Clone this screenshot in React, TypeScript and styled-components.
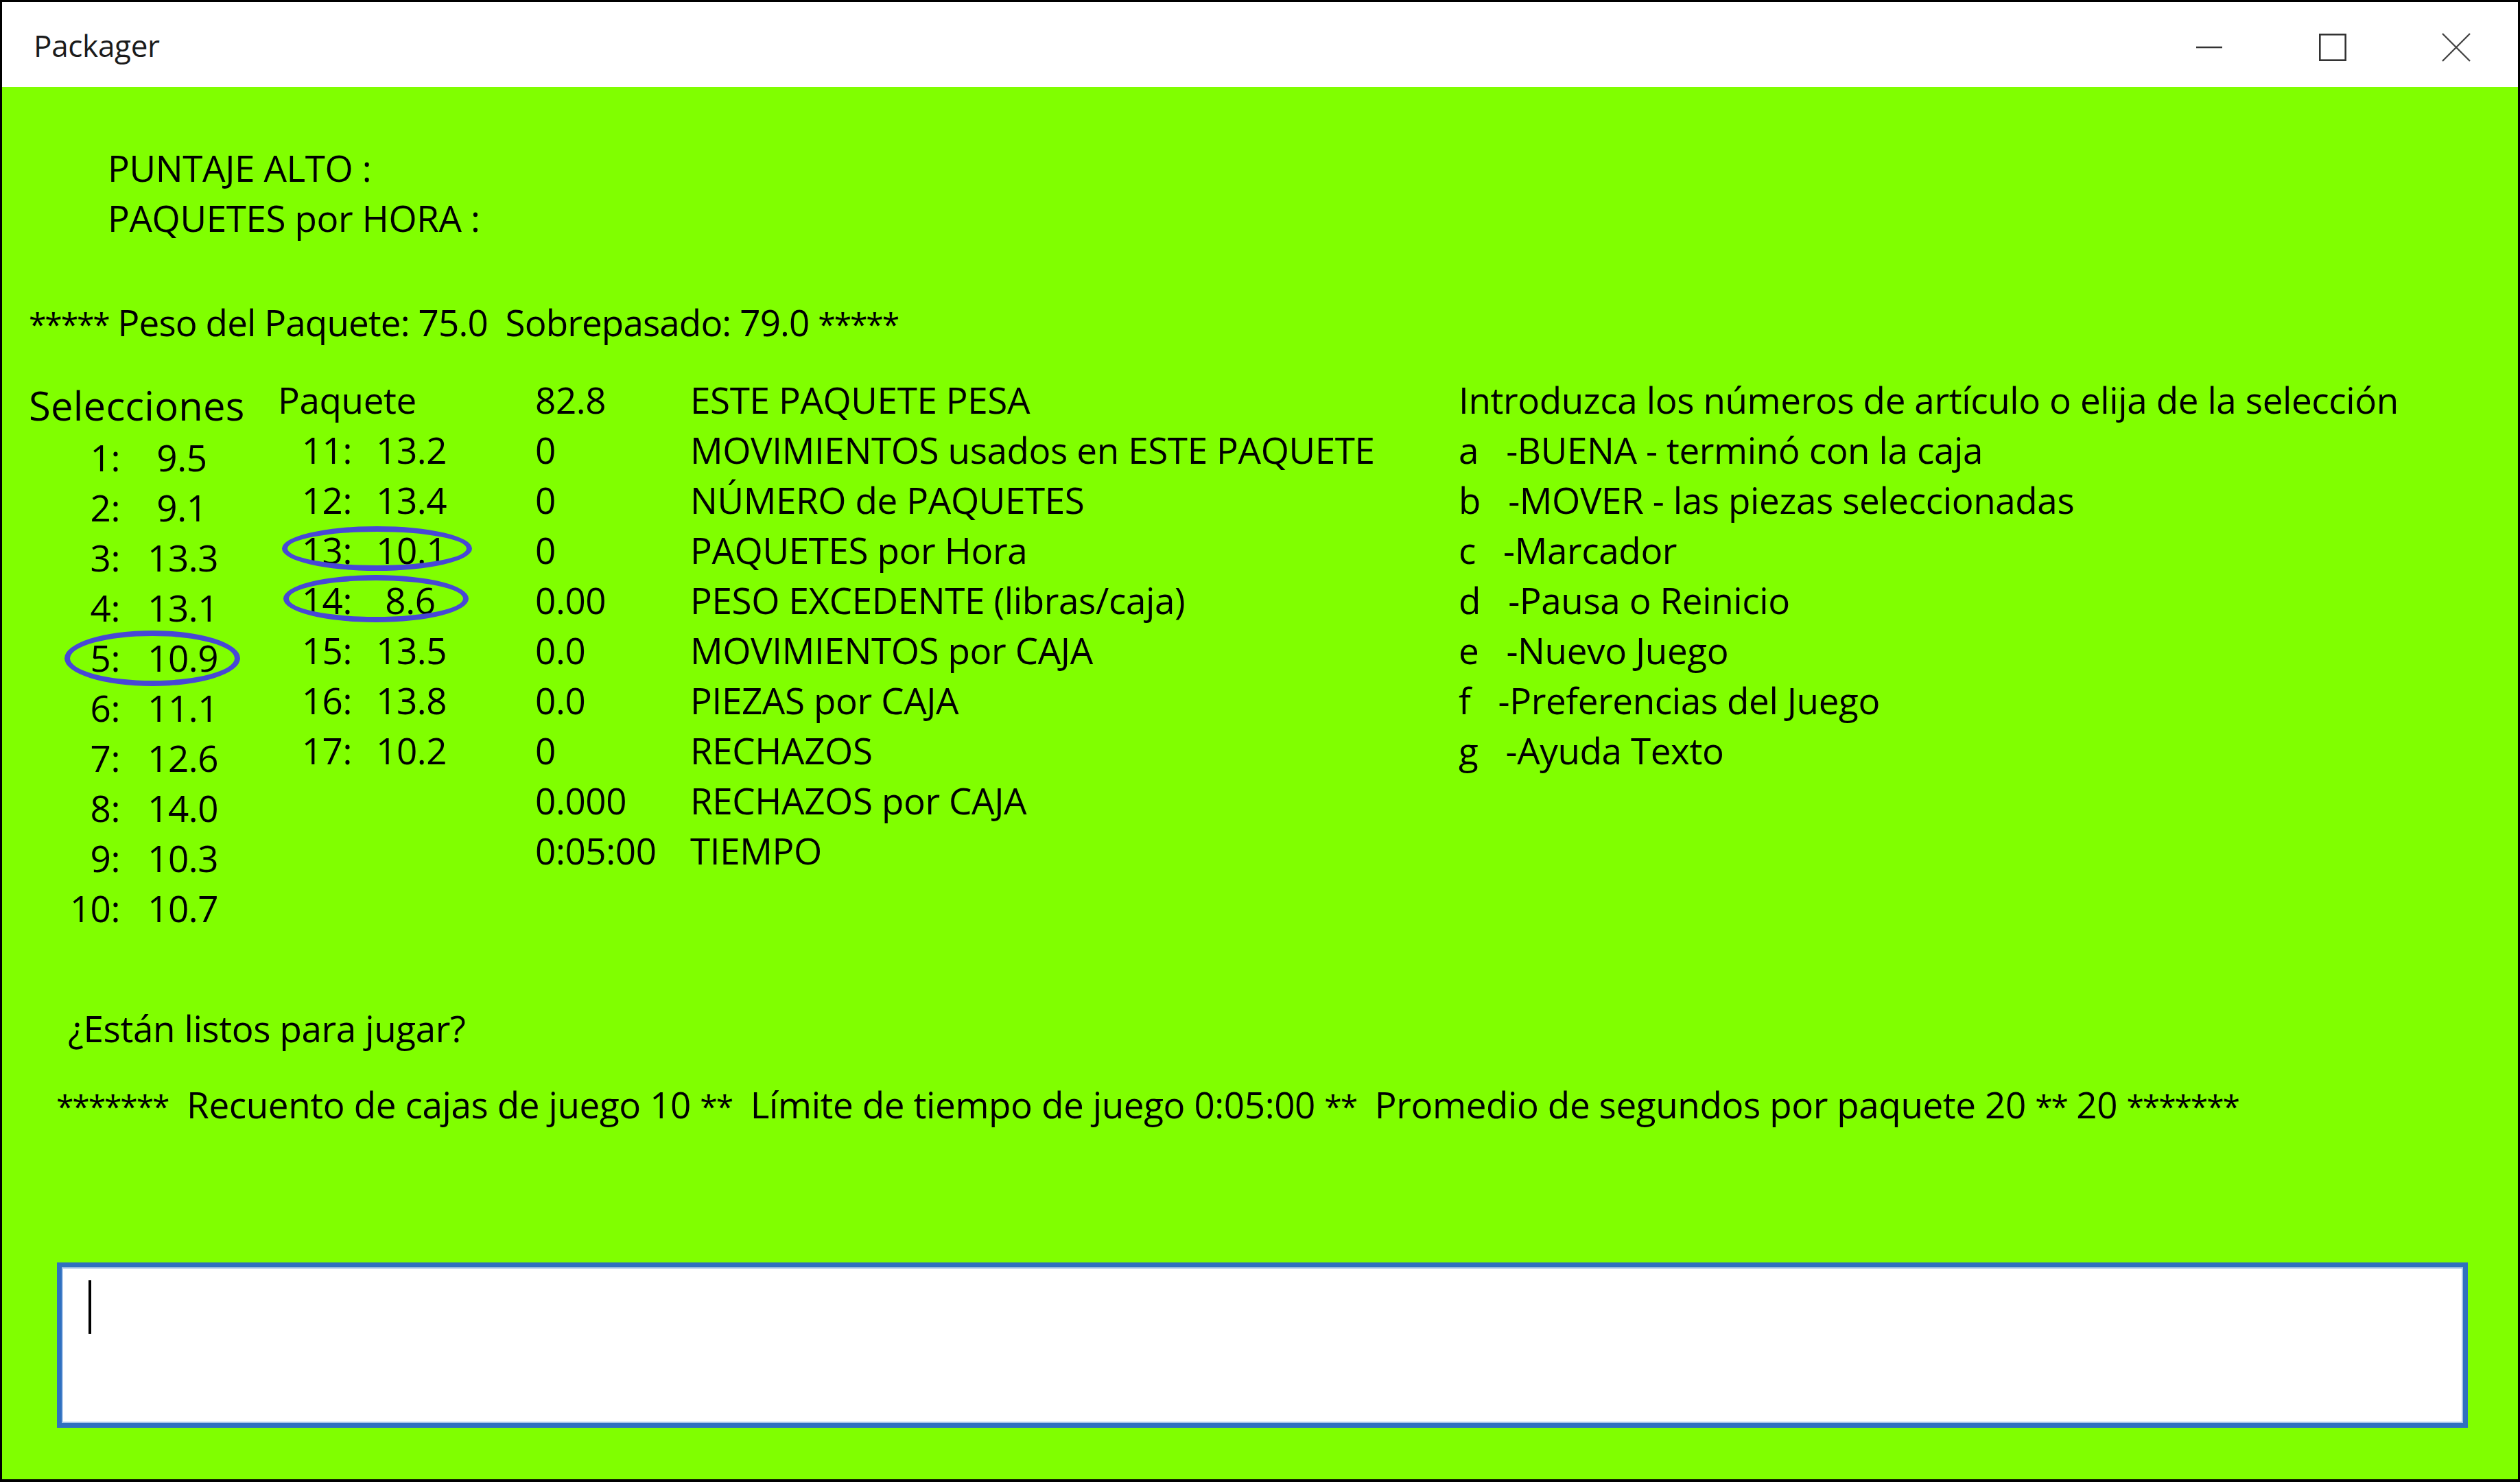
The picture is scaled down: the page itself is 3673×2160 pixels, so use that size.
import React from "react";
import styled, { createGlobalStyle } from "styled-components";

const GlobalStyle = createGlobalStyle`
    html, body {
        margin: 0;
        padding: 0;
        background: #000;
    }
    body {
        padding: 3px 3px 4px 3px;
        font-family: "Open Sans", "Noto Sans", sans-serif;
    }
`;

const FONT = `"Open Sans", "Noto Sans", "DejaVu Sans", sans-serif`;

const Window = styled.div`
    width: 3667px;
    height: 2153px;
    display: flex;
    flex-direction: column;
    background: #80ff00;
    overflow: hidden;
`;

const TitleBar = styled.div`
    height: 124px;
    flex: none;
    background: #ffffff;
    display: flex;
    align-items: center;
`;

const Title = styled.div`
    flex: 1;
    padding-left: 46px;
    padding-top: 2px;
    font-family: ${FONT};
    font-size: 44px;
    letter-spacing: -0.3px;
    color: #1b1b1b;
`;

const CaptionButton = styled.div`
    width: 180px;
    height: 124px;
    display: flex;
    align-items: center;
    justify-content: center;
    padding-top: 8px;
    box-sizing: border-box;
`;

const Content = styled.div`
    flex: 1;
    display: flex;
    flex-direction: column;
    padding: 81px 0 0 39px;
    font-family: ${FONT};
    font-size: 53px;
    line-height: 73px;
    letter-spacing: -0.4px;
    color: #000;
`;

const Line = styled.div<{ $indent?: number; $gap?: number }>`
    white-space: pre;
    height: 73px;
    padding-left: ${({ $indent }) => $indent ?? 0}px;
    margin-top: ${({ $gap }) => $gap ?? 0}px;
`;

const Stars = styled.span`
    font-size: 46px;
    line-height: 0;
    letter-spacing: -2px;
`;

const WeightText = styled.span`
    letter-spacing: -0.9px;
`;

const ScoreBlock = styled.div`
    display: flex;
    flex-direction: column;
    padding-left: 115px;
`;

const Board = styled.div`
    display: flex;
    margin-top: 40px;
`;

const Column = styled.div<{ $width?: number; $top?: number }>`
    display: flex;
    flex-direction: column;
    width: ${({ $width }) => ($width ? `${$width}px` : "auto")};
    padding-top: ${({ $top }) => $top ?? 0}px;
    flex: none;
`;

const BigHeading = styled.div`
    font-size: 58px;
    line-height: 78px;
    letter-spacing: 0.2px;
    white-space: pre;
`;

const Heading = styled.div`
    white-space: pre;
`;

const ItemRow = styled.div`
    position: relative;
    display: flex;
    white-space: pre;
`;

const ItemIndex = styled.span<{ $width: number }>`
    width: ${({ $width }) => $width}px;
    text-align: right;
    flex: none;
`;

const ItemValue = styled.span<{ $gap: number }>`
    margin-left: ${({ $gap }) => $gap}px;
`;

const Mark = styled.span<{ $l: number; $t: number; $w: number; $h: number }>`
    position: absolute;
    left: ${({ $l }) => $l}px;
    top: ${({ $t }) => $t}px;
    width: ${({ $w }) => $w}px;
    height: ${({ $h }) => $h}px;
    box-sizing: border-box;
    border: 8px solid #4747d6;
    border-radius: 50%;
    pointer-events: none;
`;

const InputBox = styled.div`
    margin: 194px 0 0 41px;
    width: 3514px;
    height: 241px;
    box-sizing: border-box;
    background: #ffffff;
    border: 7px solid #3070c0;
    box-shadow: inset 0 0 0 2px #a9c6ea;
    padding: 19px 0 0 39px;
`;

const Caret = styled.div`
    width: 4px;
    height: 78px;
    background: #000;
`;

type Mk = { l: number; t: number; w: number; h: number };

const selecciones: { n: number; v: string; mark?: Mk }[] = [
    { n: 1, v: " 9.5" },
    { n: 2, v: " 9.1" },
    { n: 3, v: "13.3" },
    { n: 4, v: "13.1" },
    { n: 5, v: "10.9", mark: { l: 52, t: -3, w: 256, h: 81 } },
    { n: 6, v: "11.1" },
    { n: 7, v: "12.6" },
    { n: 8, v: "14.0" },
    { n: 9, v: "10.3" },
    { n: 10, v: "10.7" },
];

const paquete: { n: number; v: string; mark?: Mk }[] = [
    { n: 11, v: "13.2" },
    { n: 12, v: "13.4" },
    { n: 13, v: "10.1", mark: { l: 6, t: 2, w: 277, h: 65 } },
    { n: 14, v: " 8.6", mark: { l: 8, t: 0, w: 270, h: 69 } },
    { n: 15, v: "13.5" },
    { n: 16, v: "13.8" },
    { n: 17, v: "10.2" },
];

const stats: [string, string][] = [
    ["82.8", "ESTE PAQUETE PESA"],
    ["0", "MOVIMIENTOS usados en ESTE PAQUETE"],
    ["0", "NÚMERO de PAQUETES"],
    ["0", "PAQUETES por Hora"],
    ["0.00", "PESO EXCEDENTE (libras/caja)"],
    ["0.0", "MOVIMIENTOS por CAJA"],
    ["0.0", "PIEZAS por CAJA"],
    ["0", "RECHAZOS"],
    ["0.000", "RECHAZOS por CAJA"],
    ["0:05:00", "TIEMPO"],
];

const menu = [
    "Introduzca los números de artículo o elija de la selección",
    "a   -BUENA - terminó con la caja",
    "b   -MOVER - las piezas seleccionadas",
    "c   -Marcador",
    "d   -Pausa o Reinicio",
    "e   -Nuevo Juego",
    "f   -Preferencias del Juego",
    "g   -Ayuda Texto",
];

const MinimizeIcon = () => (
    <svg width="40" height="6" viewBox="0 0 40 6">
        <line x1="1" y1="3" x2="39" y2="3" stroke="#333" strokeWidth="2.6" />
    </svg>
);

const MaximizeIcon = () => (
    <svg width="40" height="40" viewBox="0 0 40 40">
        <rect x="1.3" y="1.3" width="37.4" height="37.4" fill="none" stroke="#333" strokeWidth="2.6" />
    </svg>
);

const CloseIcon = () => (
    <svg width="42" height="42" viewBox="0 0 42 42">
        <path d="M1 1 L41 41 M41 1 L1 41" stroke="#444" strokeWidth="2.3" />
    </svg>
);

const App = () => {
    return (
        <>
            <GlobalStyle />
            <Window>
                <TitleBar>
                    <Title>Packager</Title>
                    <CaptionButton>
                        <MinimizeIcon />
                    </CaptionButton>
                    <CaptionButton>
                        <MaximizeIcon />
                    </CaptionButton>
                    <CaptionButton>
                        <CloseIcon />
                    </CaptionButton>
                </TitleBar>
                <Content>
                    <ScoreBlock>
                        <Line>PUNTAJE ALTO :</Line>
                        <Line>PAQUETES por HORA :</Line>
                    </ScoreBlock>
                    <Line $gap={79}>
                        <Stars>*****</Stars>
                        <WeightText>
                            {" Peso del Paquete: 75.0  Sobrepasado: 79.0 "}
                        </WeightText>
                        <Stars>*****</Stars>
                    </Line>
                    <Board>
                        <Column $width={363} $top={6}>
                            <BigHeading>Selecciones</BigHeading>
                            {selecciones.map((s) => (
                                <ItemRow key={s.n}>
                                    <ItemIndex $width={133}>{s.n}:</ItemIndex>
                                    <ItemValue $gap={40}>{s.v}</ItemValue>
                                    {s.mark && (
                                        <Mark
                                            $l={s.mark.l}
                                            $t={s.mark.t}
                                            $w={s.mark.w}
                                            $h={s.mark.h}
                                        />
                                    )}
                                </ItemRow>
                            ))}
                        </Column>
                        <Column $width={375}>
                            <Heading>Paquete</Heading>
                            {paquete.map((p) => (
                                <ItemRow key={p.n}>
                                    <ItemIndex $width={108}>{p.n}:</ItemIndex>
                                    <ItemValue $gap={35}>{p.v}</ItemValue>
                                    {p.mark && (
                                        <Mark
                                            $l={p.mark.l}
                                            $t={p.mark.t}
                                            $w={p.mark.w}
                                            $h={p.mark.h}
                                        />
                                    )}
                                </ItemRow>
                            ))}
                        </Column>
                        <Column $width={226}>
                            {stats.map(([v, label]) => (
                                <Heading key={label}>{v}</Heading>
                            ))}
                        </Column>
                        <Column $width={1120}>
                            {stats.map(([, label]) => (
                                <Heading key={label}>{label}</Heading>
                            ))}
                        </Column>
                        <Column>
                            {menu.map((m) => (
                                <Heading key={m}>{m}</Heading>
                            ))}
                        </Column>
                    </Board>
                    <Line $indent={57} $gap={102}>
                        ¿Están listos para jugar?
                    </Line>
                    <Line $indent={40} $gap={38}>
                        <Stars>*******</Stars>
                        {"  Recuento de cajas de juego 10 "}
                        <Stars>**</Stars>
                        {"  Límite de tiempo de juego 0:05:00 "}
                        <Stars>**</Stars>
                        {"  Promedio de segundos por paquete 20 "}
                        <Stars>**</Stars>
                        {" 20 "}
                        <Stars>*******</Stars>
                    </Line>
                    <InputBox>
                        <Caret />
                    </InputBox>
                </Content>
            </Window>
        </>
    );
};

export default App;
